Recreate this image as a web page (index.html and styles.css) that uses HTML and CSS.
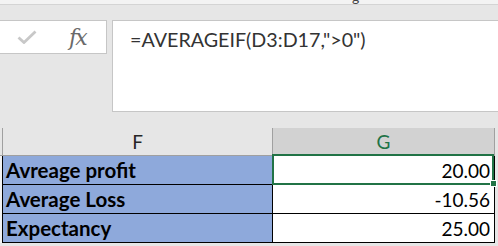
FILE: index.html
```html
<!DOCTYPE html>
<html>
<head>
    <title>AVERAGEIF</title>
    <link rel="stylesheet" href="styles.css">
</head>
<body>
    <div class="top-strip"><span class="cut-glyph">g</span></div>

    <div class="formula-bar">
        <div class="bar-actions">
            <svg class="check" width="20" height="14" viewBox="0 0 20 14">
                <path d="M1.5 7.5 L7 12.5 L18.5 1.5" fill="none" stroke="#c8c8c8" stroke-width="2.8"/>
            </svg>
            <span class="fx">fx</span>
        </div>
        <div class="formula-input">=AVERAGEIF(D3:D17,"&gt;0")</div>
    </div>

    <div class="sheet">
        <div class="corner"></div>
        <div class="col-head">F</div>
        <div class="col-head selected">G</div>
        <div class="edge"></div>

        <div class="stub"></div>
        <div class="label">Avreage profit</div>
        <div class="value active">20.00<span class="handle"></span></div>
        <div class="edge"></div>

        <div class="stub"></div>
        <div class="label">Average Loss</div>
        <div class="value">-10.56</div>
        <div class="edge"></div>

        <div class="stub"></div>
        <div class="label">Expectancy</div>
        <div class="value">25.00</div>
        <div class="edge"></div>
    </div>
</body>
</html>
```

FILE: styles.css
```css
body {
    margin: 0;
    width: 498px;
    height: 246px;
    overflow: hidden;
    background-color: #e6e6e6;
    font-family: Lato, "Liberation Sans", sans-serif;
}

.top-strip {
    position: relative;
    height: 4px;
    background-color: #f3f3f3;
    border-bottom: 1px solid #d4d4d4;
}

.cut-glyph {
    position: absolute;
    left: 352px;
    top: -12px;
    font-size: 14px;
    color: #444444;
}

.formula-bar {
    display: flex;
    gap: 5px;
    margin-top: 15px;
    height: 92px;
}

.bar-actions {
    display: flex;
    align-items: center;
    box-sizing: border-box;
    width: 107px;
    height: 34px;
    background-color: #ffffff;
    border: 1px solid #c6c6c6;
    border-left: none;
}

.check {
    margin-left: 17px;
}

.fx {
    margin-left: 32px;
    font-family: "DejaVu Serif", serif;
    font-style: italic;
    font-size: 22px;
    color: #6a6a6a;
    letter-spacing: -2px;
}

.formula-input {
    flex: 1;
    box-sizing: border-box;
    background-color: #ffffff;
    border: 1px solid #c6c6c6;
    border-right: none;
    padding: 7px 0 0 17px;
    font-size: 19.7px;
    color: #333333;
}

.sheet {
    display: grid;
    grid-template-columns: 2px 270px 223px 3px;
    grid-template-rows: 28px 29px 29px 29px;
    margin-top: 16px;
    font-size: 19px;
}

.sheet > div {
    box-sizing: border-box;
}

.corner {
    border-bottom: 1px solid #a0a0a0;
}

.col-head {
    display: flex;
    align-items: center;
    justify-content: center;
    border-left: 1px solid #a0a0a0;
    border-bottom: 1px solid #a0a0a0;
    color: #262626;
    font-size: 19px;
}

.col-head.selected {
    background-color: #d2d2d2;
    border-right: 1px solid #a0a0a0;
    color: #217346;
}

.stub {
    background-color: #f3f3f3;
}

.label {
    display: flex;
    align-items: center;
    padding-left: 3px;
    background-color: #8ea9db;
    border-left: 1px solid #000000;
    border-bottom: 1px solid #000000;
    font-size: 20.5px;
    font-weight: bold;
    color: #000000;
}

.value {
    position: relative;
    display: flex;
    align-items: center;
    justify-content: flex-end;
    padding-right: 4px;
    background-color: #ffffff;
    border-left: 1px solid #000000;
    border-right: 1px solid #000000;
    border-bottom: 1px solid #000000;
    color: #000000;
}

.value.active::after {
    content: "";
    position: absolute;
    left: -1px;
    top: -2px;
    right: 0;
    bottom: -1px;
    border: 2px solid #217346;
}

.handle {
    position: absolute;
    right: -3px;
    bottom: -3px;
    width: 5px;
    height: 5px;
    background-color: #217346;
    border: 1px solid #ffffff;
    z-index: 1;
}

.edge {
    background-color: #e6e6e6;
}
```
